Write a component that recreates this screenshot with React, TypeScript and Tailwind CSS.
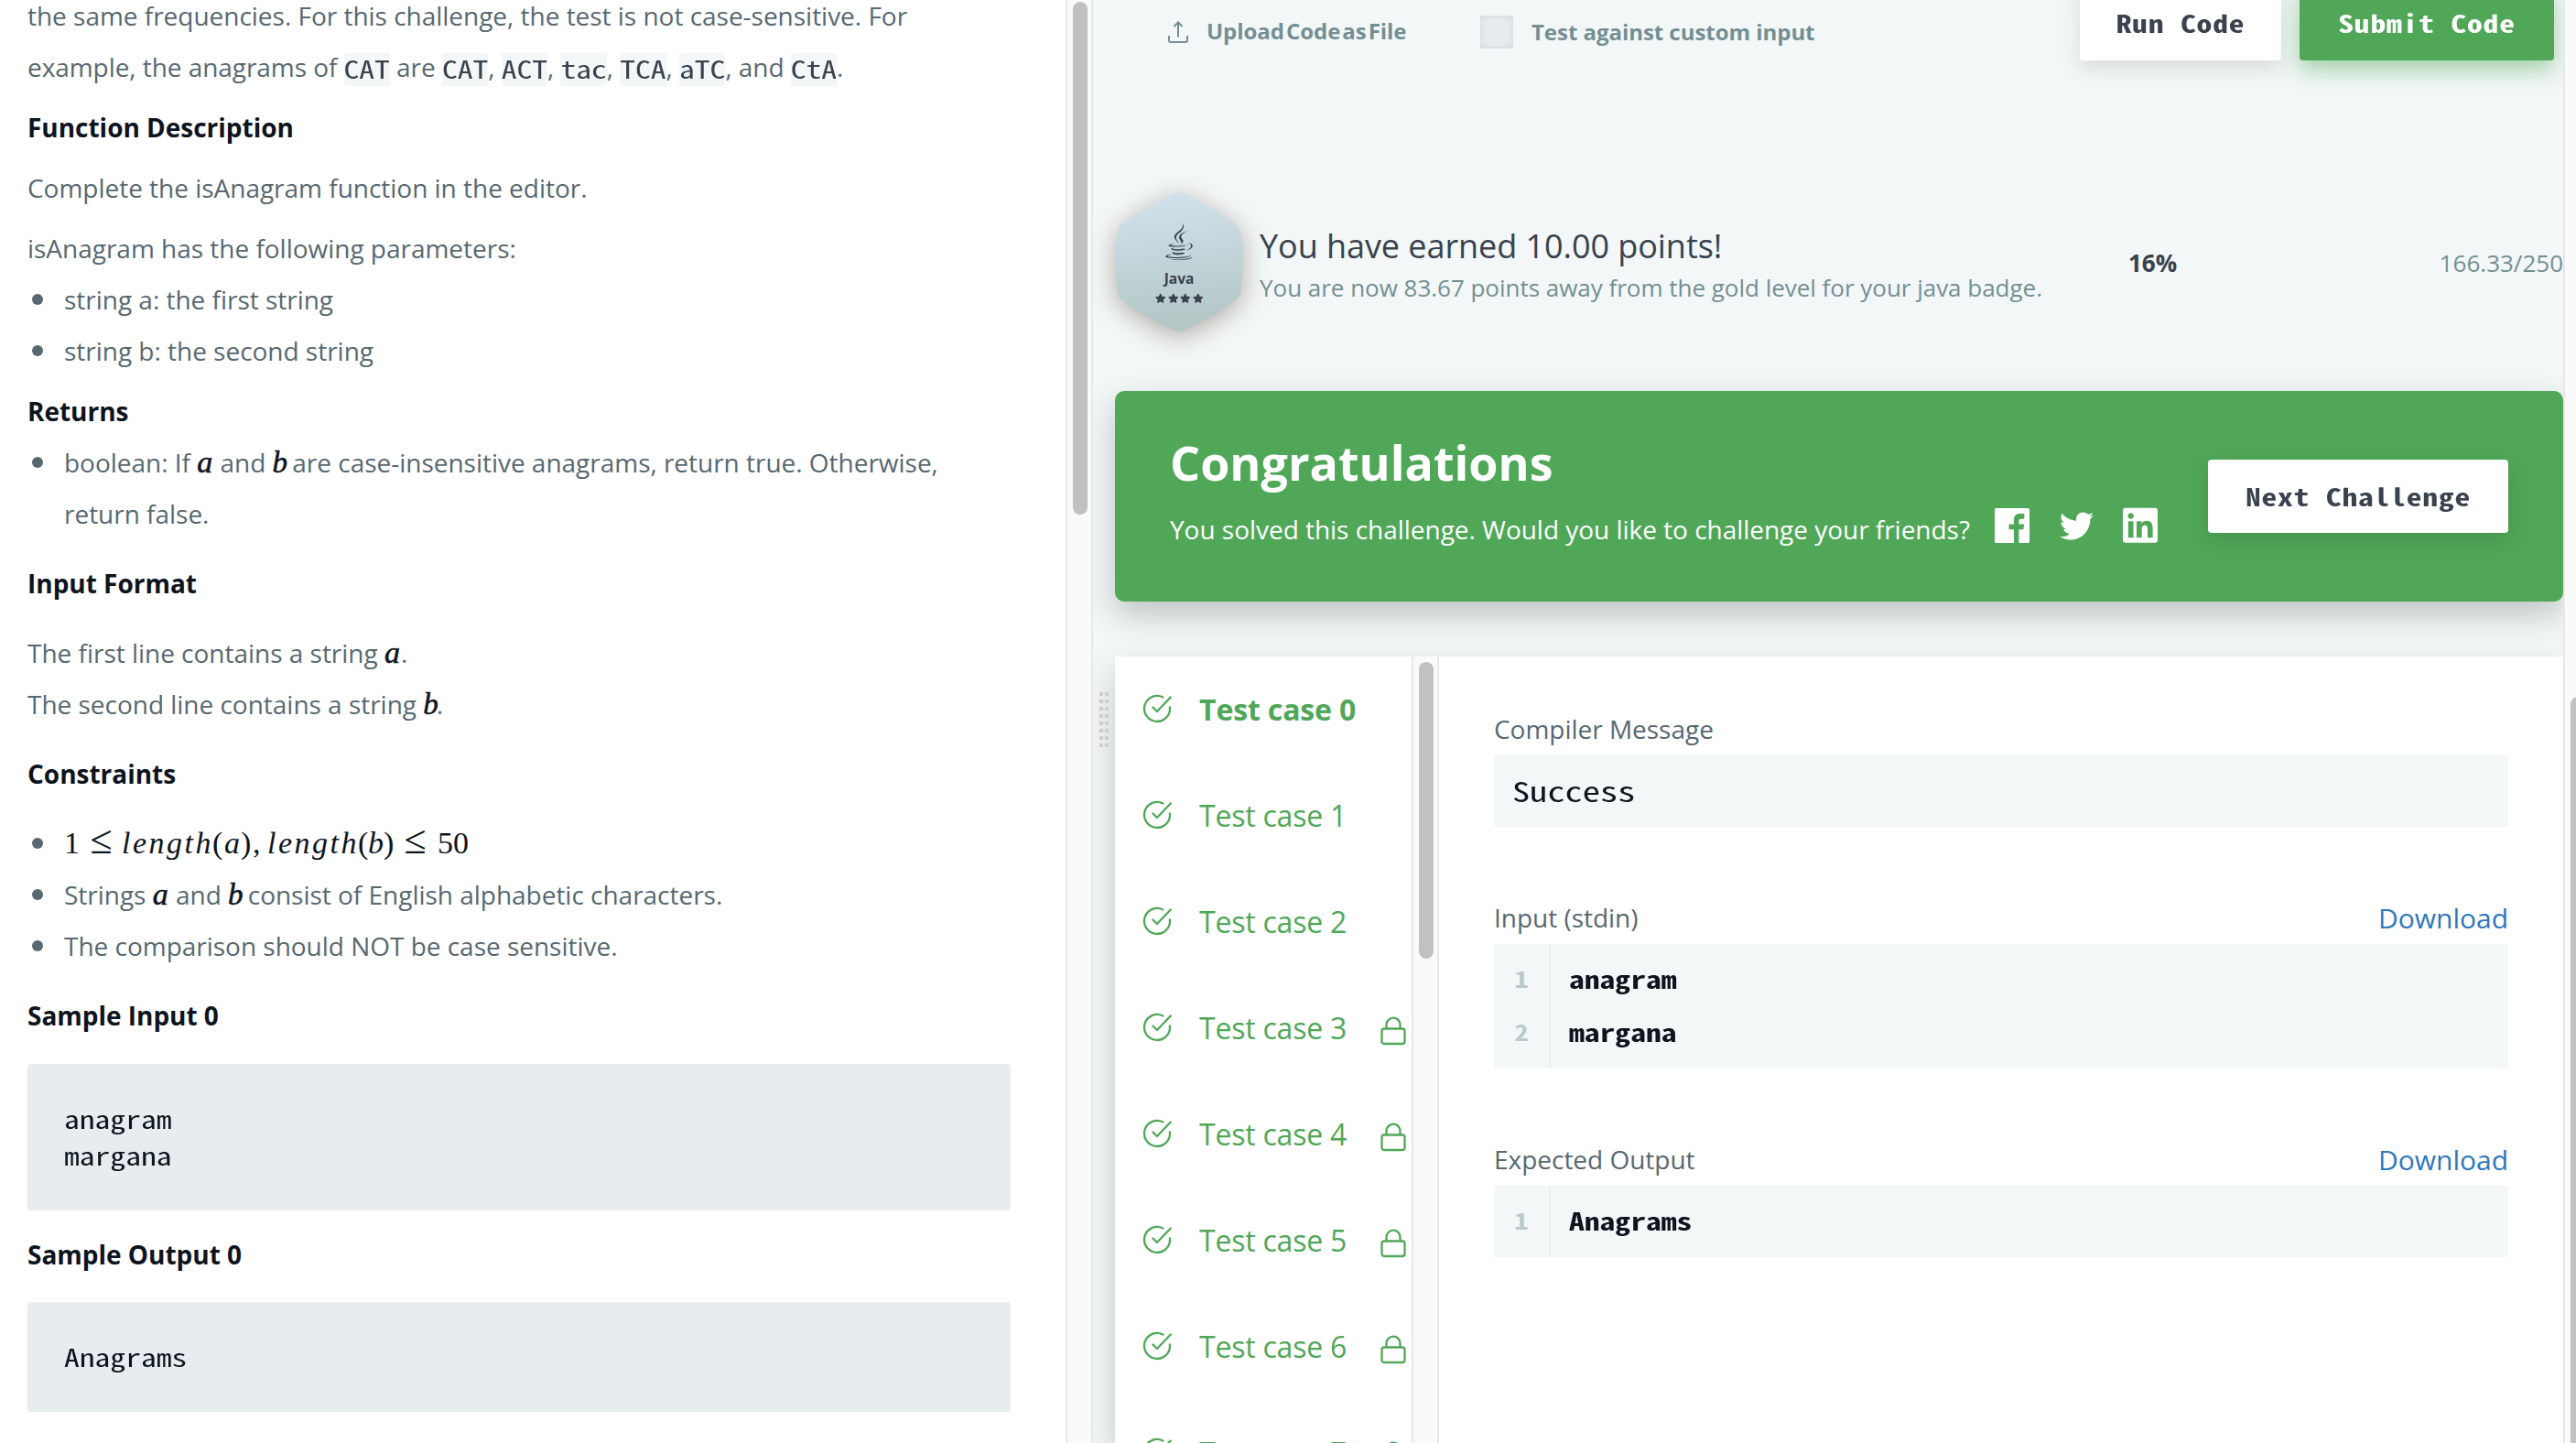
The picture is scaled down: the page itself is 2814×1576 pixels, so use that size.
import type { ReactNode } from 'react';
import { FaJava, FaLinkedin, FaStar, FaTwitter } from 'react-icons/fa';

/* Monospaced run with wide, low letter forms. */
const Mono = ({ children, className = '' }: { children: ReactNode; className?: string }) => (
  <span className={"inline-block scale-y-[0.79] font-['Noto_Sans_Mono_CJK_SC','Liberation_Mono',monospace] whitespace-pre " + className}>
    {children}
  </span>
);

const Code = ({ children }: { children: ReactNode }) => (
  <code className="inline-flex h-9 items-start bg-[#f3f7f8] align-[-4.5px] text-[#39424e]">
    <Mono className="text-[33.6px] leading-[33px] tracking-normal">{children}</Mono>
  </code>
);

const MathA = () => (
  <i className="inline-block w-[18px] font-['Liberation_Serif',serif] text-[34px] leading-none text-[#0e141e] [-webkit-text-stroke:0.6px_#0e141e]">a</i>
);
const MathB = () => (
  <i className="inline-block w-[14.5px] font-['Liberation_Serif',serif] text-[33px] leading-none text-[#0e141e] [-webkit-text-stroke:0.6px_#0e141e]">b</i>
);

const LessEqual = ({ className = '' }: { className?: string }) => (
  <span className={"flex w-[37px] justify-center font-['Liberation_Serif',serif] text-[44px] leading-none " + className}>≤</span>
);

const Formula = () => (
  <span className="-mt-px inline-flex h-14 items-baseline whitespace-pre font-['Liberation_Serif',serif] text-[34px] leading-[56px] tracking-normal text-[#0e141e]">
    <span className="w-[22px]">1</span>
    <LessEqual className="mr-1" />
    <i className="w-[99px] tracking-[2.5px]">length</i>
    <span className="w-[13px]">(</span>
    <i className="w-[18px]">a</i>
    <span className="w-[13px]">)</span>
    <span className="w-[16px]">,</span>
    <i className="w-[99px] tracking-[2.5px]">length</i>
    <span className="w-[11px]">(</span>
    <i className="w-[17px]">b</i>
    <span className="w-[16px]">)</span>
    <LessEqual />
    <span className="pl-1.5">50</span>
  </span>
);

const Heading = ({ children, className }: { children: ReactNode; className: string }) => (
  <h3 className={'font-bold text-[#0e141e] ' + className}>{children}</h3>
);

const Bullet = ({ children }: { children: ReactNode }) => (
  <li className="flex">
    <span className="mt-[22px] mr-[23px] ml-[5px] size-3 shrink-0 rounded-full bg-[#576871]" />
    <div>{children}</div>
  </li>
);

const Pre = ({ lines, className }: { lines: string[]; className: string }) => (
  <div className={'w-[1074px] rounded-[4px] bg-[#e7ecef] px-10 pt-10 pb-10 text-[#0e141e] ' + className}>
    {lines.map((l) => (
      <div key={l} className="flex h-10">
        <Mono className="text-[33.6px] leading-10 tracking-normal">{l}</Mono>
      </div>
    ))}
  </div>
);

const Problem = () => (
  <section className="-mt-[11px] w-[1164px] shrink-0 pl-[30px] text-[28px] leading-[56px] tracking-[-0.02px] text-[#576871]">
    <p className="h-14 whitespace-nowrap">the same frequencies. For this challenge, the test is not case-sensitive. For</p>
    <p className="h-14 tracking-[-0.06px] whitespace-nowrap">
      example, the anagrams of <Code>CAT</Code> are <Code>CAT</Code>, <Code>ACT</Code>, <Code>tac</Code>, <Code>TCA</Code>, <Code>aTC</Code>, and <Code>CtA</Code>.
    </p>
    <Heading className="mt-2.5">Function Description</Heading>
    <p className="mt-2.5">Complete the isAnagram function in the editor.</p>
    <p className="mt-2.5">isAnagram has the following parameters:</p>
    <ul>
      <Bullet>string a: the first string</Bullet>
      <Bullet>string b: the second string</Bullet>
    </ul>
    <Heading className="mt-2.5">Returns</Heading>
    <ul>
      <Bullet>
        <p className="h-14">boolean: If <MathA /> and <MathB /> are case-insensitive anagrams, return true. Otherwise,</p>
        <p>return false.</p>
      </Bullet>
    </ul>
    <Heading className="mt-5">Input Format</Heading>
    <p className="mt-5 h-14">The first line contains a string <MathA />.</p>
    <p className="h-14">The second line contains a string <MathB />.</p>
    <Heading className="mt-5">Constraints</Heading>
    <ul className="mt-5">
      <Bullet><div className="h-14"><Formula /></div></Bullet>
      <Bullet><p className="h-14">Strings <MathA /> and <MathB /> consist of English alphabetic characters.</p></Bullet>
      <Bullet>The comparison should NOT be case sensitive.</Bullet>
    </ul>
    <Heading className="mt-5">Sample Input 0</Heading>
    <Pre className="mt-[25px]" lines={['anagram', 'margana']} />
    <Heading className="mt-5">Sample Output 0</Heading>
    <Pre className="mt-6" lines={['Anagrams']} />
  </section>
);

const Hexagon = () => (
  <div className="relative h-[152px] w-[140px] shrink-0">
    <svg viewBox="0 0 140 152" className="absolute inset-0 size-full overflow-visible drop-shadow-[0_6px_14px_rgba(60,40,20,0.36)]">
      <defs>
        <linearGradient id="silver" x1="0.45" y1="0" x2="0.55" y2="1">
          <stop offset="0" stopColor="#d2e2ec" />
          <stop offset="1" stopColor="#b1c5c4" />
        </linearGradient>
      </defs>
      <path fill="url(#silver)" d="M64 1.500Q70 -1.500 76 1.500Q110 18 131 34Q136 38 137 43Q139.500 58 139.500 76Q139.500 96 137 109Q136 115 131 118Q108 136 76 150.500Q70 153.500 64 150.500Q32 136 8 118Q4 115 3 109Q0.500 96 0.500 76Q0.500 58 3 43Q4 38 8 34Q32 16 64 1.500Z" />
    </svg>
    <div className="absolute inset-0 flex flex-col items-center pt-[34px] text-[#39424e]">
      <FaJava className="h-10 w-[30px]" />
      <span className="mt-[11px] text-[15.5px] leading-[18px] font-bold">Java</span>
      <span className="mt-[7px] flex gap-[2px]">
        {[0, 1, 2, 3].map((i) => <FaStar key={i} className="size-[11.5px]" />)}
      </span>
    </div>
  </div>
);

const CheckIcon = () => (
  <svg viewBox="0 0 32 32" className="mb-0.5 size-8 shrink-0" fill="none" stroke="currentColor" strokeWidth="2.300" strokeLinecap="round">
    <path d="M22.300 3.500A14 14 0 1 0 29.900 14.500" />
    <path d="M11.400 14.500L15.900 19L30.800 3.500" strokeLinejoin="round" />
  </svg>
);

const LockIcon = () => (
  <svg viewBox="0 0 28 32" className="h-8 w-7" fill="none" stroke="currentColor" strokeWidth="2.300">
    <rect x="1.500" y="13.500" width="25" height="16.500" rx="2.500" />
    <path d="M6.500 13.500V9.200a7.500 7.500 0 0 1 15 0V13.500" />
  </svg>
);

const FacebookIcon = () => (
  <svg viewBox="0 0 38 38" className="size-[38px]" fill="currentColor" fillRule="evenodd">
    <path d="M1.500 0H36.500Q38 0 38 1.500V36.500Q38 38 36.500 38H26.400V23.300H31.300L32.200 17.600H26.400V14.500C26.400 12.600 27.100 11.700 29 11.700H32.300V6H27.500C23.200 6 20.900 8.500 20.900 12.700V17.600H15.500V23.300H20.900V38H1.500Q0 38 0 36.500V1.500Q0 0 1.500 0Z" />
  </svg>
);

const TestCase = ({ n }: { n: number }) => (
  <li className="flex h-[116px] shrink-0 items-center pl-[30px] text-[32px] text-[#50a758]">
    <CheckIcon />
    <span className={'ml-[30px] w-[198px] whitespace-nowrap ' + (n === 0 ? 'font-bold tracking-[-0.14px]' : 'tracking-[-0.22px]')}>Test case {n}</span>
    {n > 2 && <span className="mt-1.5"><LockIcon /></span>}
  </li>
);

const Lines = ({ rows }: { rows: string[] }) => (
  <div className="flex bg-[#f3f7f8] leading-[58px] font-bold">
    <div className="w-[62px] border-r-2 border-[#e9eff0] pt-[9px] pb-[11px] text-[31px] text-[#b9cacc]">
      {rows.map((_, i) => <div key={i} className="flex h-[58px] justify-center"><Mono>{i + 1}</Mono></div>)}
    </div>
    <div className="pt-[9px] pb-[11px] pl-5 text-[33.6px] text-[#0e141e]">
      {rows.map((r) => <div key={r} className="flex h-[58px]"><Mono>{r}</Mono></div>)}
    </div>
  </div>
);

const Label = ({ text, download }: { text: string; download?: boolean }) => (
  <div className="flex h-[42px] items-center justify-between text-[28px] tracking-[-0.02px] text-[#576871]">
    <span>{text}</span>
    {download && <a className="text-[30px] text-[#2e78bd]">Download</a>}
  </div>
);

const Results = () => (
  <div className="mt-[60px] flex h-[859px] bg-white shadow-[0_16px_36px_rgba(0,0,0,0.19)]">
    <ul className="flex w-[324px] flex-col overflow-hidden">
      {[0, 1, 2, 3, 4, 5, 6, 7].map((n) => <TestCase key={n} n={n} />)}
    </ul>
    <div className="w-[30px] border-x-2 border-[#e8e8e8] bg-[#fafafa] pt-1.5 pl-1.5">
      <div className="h-[324px] w-4 rounded-full bg-[#c1c1c1]" />
    </div>
    <div className="flex-1 px-[60px] pt-[58px]">
      <Label text="Compiler Message" />
      <div className="mt-2 flex h-[78px] bg-[#f3f7f8] pl-5 text-[#0e141e]">
        <Mono className="text-[38.4px] leading-[74px]">Success</Mono>
      </div>
      <div className="mt-[78px] mb-2"><Label text="Input (stdin)" download /></div>
      <Lines rows={['anagram', 'margana']} />
      <div className="mt-[78px] mb-2"><Label text="Expected Output" download /></div>
      <Lines rows={['Anagrams']} />
    </div>
  </div>
);

const Button = ({ children, className }: { children: string; className: string }) => (
  <button className={'flex h-20 items-center justify-center rounded-[4px] ' + className}>
    <Mono className="text-[33.6px] leading-[56px] font-bold tracking-[0.8px]">{children}</Mono>
  </button>
);

export default function App() {
  return (
    <div className="flex h-[1576px] w-[2814px] overflow-hidden bg-white font-['Open_Sans',sans-serif]">
      <Problem />
      <div className="w-[30px] shrink-0 border-x-2 border-[#e8e8e8] bg-[#fafafa] pt-0.5 pl-1.5">
        <div className="h-[560px] w-4 rounded-full bg-[#c1c1c1]" />
      </div>
      <main className="flex w-[1606px] shrink-0 overflow-hidden bg-[#f3f7f8]">
        <div className="relative z-10 mt-[756px] ml-[7px] grid h-[60px] w-[17px] grid-cols-[4px_4px] content-start gap-x-0.5 gap-y-1">
          {Array.from({ length: 16 }, (_, i) => <span key={i} className="size-1 bg-[#cdcdcd]" />)}
        </div>
        <div className="w-[1582px] shrink-0">
          <div className="flex h-[210px] items-start text-[24px] font-bold tracking-[-0.04px] text-[#738f93]">
            <svg viewBox="0 0 22 24" className="mt-[23px] ml-[58px] h-6 w-[22px]" fill="none" stroke="currentColor" strokeWidth="2">
              <path d="M11 17.500V1.500M6.500 6L11 1.300L15.500 6M1 16V21Q1 23 3 23H19Q21 23 21 21V16" />
            </svg>
            <span className="mt-[14px] ml-5 w-[299px] leading-10 whitespace-nowrap [word-spacing:-4.2px]">Upload Code as File</span>
            <span className="mt-[17px] size-9 bg-[#e7ecef] shadow-[inset_0_0_8px_rgba(0,0,0,0.1)]" />
            <span className="mt-[15px] ml-5 leading-10 whitespace-nowrap">Test against custom input</span>
            <Button className="-mt-3.5 mr-5 ml-auto w-[220px] bg-white pb-0.5 text-[#39424e] shadow-[0_8px_24px_rgba(0,0,0,0.12)]">Run Code</Button>
            <Button className="-mt-3.5 mr-2.5 w-[278px] bg-[#50a758] pb-0.5 text-white shadow-[0_10px_24px_rgba(80,167,88,0.5)]">Submit Code</Button>
          </div>
          <div className="flex h-[217px] items-start">
            <Hexagon />
            <div className="mt-[34px] ml-[18px] w-[949px] whitespace-nowrap">
              <div className="text-[36px] leading-[50px] tracking-[-0.06px] text-[#39424e]">You have earned 10.00 points!</div>
              <div className="text-[26px] leading-[41px] tracking-[-0.02px] text-[#738f93]">You are now 83.67 points away from the gold level for your java badge.</div>
            </div>
            <span className="mt-[57px] text-[26px] leading-10 font-bold text-[#39424e]">16%</span>
            <span className="mt-[57px] ml-auto text-[26px] leading-10 text-[#738f93]">166.33/250</span>
          </div>
          <div className="flex h-[230px] items-start rounded-[10px] bg-[#50a758] pt-[38px] pl-[60px] text-white shadow-[0_14px_36px_rgba(0,0,0,0.22)]">
            <div className="whitespace-nowrap">
              <div className="text-[52px] leading-20 font-bold">Congratulations</div>
              <div className="mt-[5px] text-[28px] leading-14 tracking-[-0.03px]">You solved this challenge. Would you like to challenge your friends?</div>
            </div>
            <div className="mt-[90px] ml-[27px] flex h-[38px] items-center">
              <FacebookIcon />
              <FaTwitter className="ml-[33px] size-[37px]" />
              <FaLinkedin className="ml-8 h-[43.500px] w-[38px]" />
            </div>
            <Button className="mt-[37px] mr-[60px] ml-auto w-[328px] bg-white text-[#39424e] shadow-[0_8px_24px_rgba(0,0,0,0.12)]">Next Challenge</Button>
          </div>
          <Results />
        </div>
      </main>
      <div className="flex w-[14px] shrink-0 overflow-hidden border-l-2 border-[#e8e8e8] bg-[#fafafa] pt-[761px] pl-1.5">
        <div className="h-[1400px] w-4 shrink-0 rounded-full bg-[#c1c1c1]" />
      </div>
    </div>
  );
}
